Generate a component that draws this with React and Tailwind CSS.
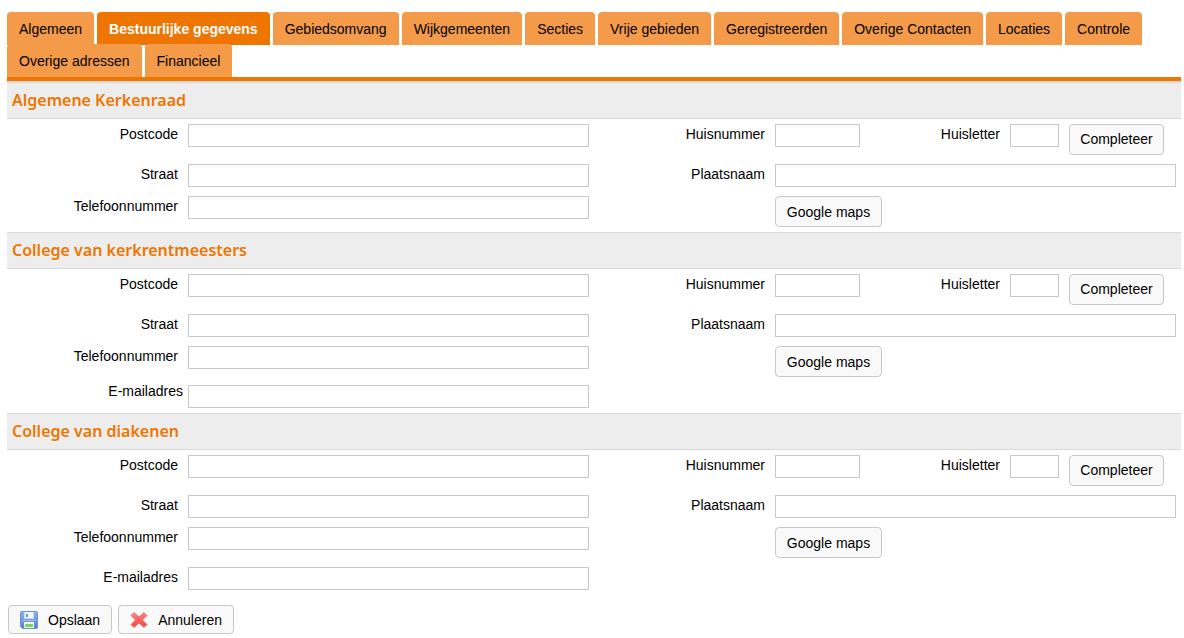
import { useState } from "react";

const TABS = [
  "Algemeen",
  "Bestuurlijke gegevens",
  "Gebiedsomvang",
  "Wijkgemeenten",
  "Secties",
  "Vrije gebieden",
  "Geregistreerden",
  "Overige Contacten",
  "Locaties",
  "Controle",
  "Overige adressen",
  "Financieel",
];

const inputClass =
  "h-[23px] border border-[#c8c8c8] bg-white px-1 outline-none focus:border-[#ee7600]";
const buttonClass =
  "rounded-[4px] border border-[#c8c8c8] bg-[#f9f9f9] text-center hover:bg-[#eeeeee]";

function Field({ id, label }) {
  return (
    <div className="flex items-start gap-2.5 pr-[5px]">
      <label htmlFor={id} className="w-[171px] shrink-0 text-right">
        {label}
      </label>
      <input id={id} type="text" className={`${inputClass} min-w-0 flex-1`} />
    </div>
  );
}

function AddressSection({ id, title, first, children }) {
  return (
    <section>
      <h2
        className={`border-b border-[#d9d9d9] bg-[#ededed] pl-[5px] font-['Noto_Sans',sans-serif] text-base leading-[35px] font-semibold text-[#ee7600] ${
          first ? "border-t-2" : "border-t"
        }`}
      >
        {title}
      </h2>

      <div className="py-[5px]">
        <div className="grid h-10 grid-cols-2">
          <Field id={`${id}-postcode`} label="Postcode" />
          <div className="flex items-start gap-2.5 pr-[17px]">
            <label htmlFor={`${id}-nummer`} className="w-[171px] shrink-0 text-right">
              Huisnummer
            </label>
            <input id={`${id}-nummer`} type="text" className={`${inputClass} w-[85px]`} />
            <label htmlFor={`${id}-letter`} className="flex-1 text-right">
              Huisletter
            </label>
            <input id={`${id}-letter`} type="text" className={`${inputClass} w-[49px]`} />
            <button type="button" className={`${buttonClass} h-[31px] w-[95px] pb-px`}>
              Completeer
            </button>
          </div>
        </div>

        <div className="grid h-8 grid-cols-2">
          <Field id={`${id}-straat`} label="Straat" />
          <Field id={`${id}-plaats`} label="Plaatsnaam" />
        </div>

        <div className="grid grid-cols-2">
          <Field id={`${id}-telefoon`} label="Telefoonnummer" />
          <div className="pl-[181px]">
            <button type="button" className={`${buttonClass} block h-[31px] w-[107px]`}>
              Google maps
            </button>
          </div>
        </div>

        {children}
      </div>
    </section>
  );
}

function SaveIcon() {
  return (
    <svg width="18" height="18" viewBox="0 0 18 18" aria-hidden="true">
      <defs>
        <linearGradient id="disk" x1="0" y1="0" x2="0" y2="1">
          <stop offset="0" stopColor="#8db4ea" />
          <stop offset="1" stopColor="#5580cc" />
        </linearGradient>
      </defs>
      <path
        d="M1.5.5h15a1 1 0 0 1 1 1v15a1 1 0 0 1-1 1h-14l-2-2v-14a1 1 0 0 1 1-1z"
        fill="url(#disk)"
        stroke="#6a92d6"
      />
      <path d="M4 1h10v7H4z" fill="#c5daf5" />
      <path d="M5 1h8v6H5z" fill="#f1f6fd" />
      <path d="M6 3h2v3H6z" fill="#6d95d8" />
      <path d="M2 9h14v1H2z" fill="#9fc0ee" />
      <path d="M4 11h10v6H4z" fill="#f4faf0" />
      <path d="M5 13h8v3H5z" fill="#86cc60" />
    </svg>
  );
}

function CancelIcon() {
  return (
    <svg width="18" height="18" viewBox="0 0 18 18" aria-hidden="true">
      <defs>
        <linearGradient id="cross" x1="0" y1="0" x2="0" y2="1">
          <stop offset="0" stopColor="#ff8583" />
          <stop offset="1" stopColor="#ee4545" />
        </linearGradient>
      </defs>
      <path
        d="M4 1.500 9 6l5-4.500 3 3L12.500 9l4.500 4.500-3 3L9 12l-5 4.500-3-3L5.500 9 1 4.500z"
        fill="url(#cross)"
        stroke="#f77472"
        strokeLinejoin="round"
      />
    </svg>
  );
}

export default function App() {
  const [active, setActive] = useState("Bestuurlijke gegevens");

  return (
    <div className="min-h-screen bg-white pt-3 pr-[3px] pl-[7px] font-['Liberation_Sans',Arial,sans-serif] text-sm leading-5 text-black">
      <nav className="flex flex-wrap gap-x-[3px] border-b-4 border-[#ee7600] pb-px">
        {TABS.map((tab) => (
          <button
            key={tab}
            type="button"
            onClick={() => setActive(tab)}
            className={
              tab === active
                ? "-mb-px h-[33px] rounded-t-[4px] bg-[#ee7600] px-3 pt-px font-bold text-white"
                : "-mb-px h-[33px] rounded-t-[4px] bg-[#f39b48] px-3 pt-px hover:bg-[#f08a25]"
            }
          >
            {tab}
          </button>
        ))}
      </nav>

      <form onSubmit={(e) => e.preventDefault()}>
        <AddressSection id="kerkenraad" title="Algemene Kerkenraad" first />

        <AddressSection id="kerkrentmeesters" title="College van kerkrentmeesters">
          <div className="grid grid-cols-2">
            <div className="flex items-start gap-[5px] pr-[5px]">
              <label htmlFor="kerkrentmeesters-email" className="w-[176px] shrink-0 pt-1 text-right">
                E-mailadres
              </label>
              <input
                id="kerkrentmeesters-email"
                type="text"
                className={`${inputClass} mt-2 min-w-0 flex-1`}
              />
            </div>
          </div>
        </AddressSection>

        <AddressSection id="diakenen" title="College van diakenen">
          <div className="grid grid-cols-2 pt-[9px]">
            <Field id="diakenen-email" label="E-mailadres" />
          </div>
        </AddressSection>

        <div className="flex gap-1.5 pt-2.5 pl-px">
          <button type="submit" className={`${buttonClass} flex h-[29px] items-center gap-2.5 px-[11px]`}>
            <SaveIcon />
            Opslaan
          </button>
          <button type="button" className={`${buttonClass} flex h-[29px] items-center gap-2.5 px-[11px]`}>
            <CancelIcon />
            Annuleren
          </button>
        </div>
      </form>
    </div>
  );
}
